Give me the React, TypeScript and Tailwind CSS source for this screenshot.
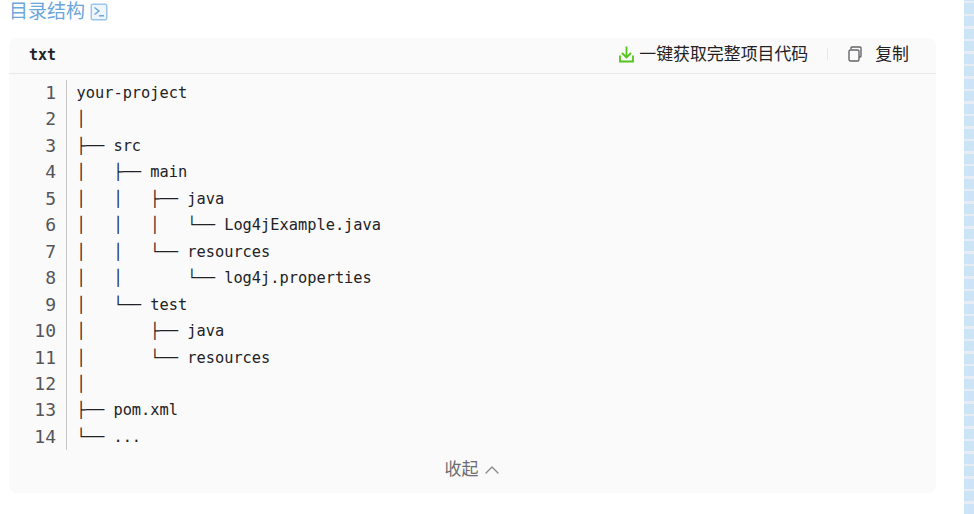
import { ChevronUp } from "lucide-react";

const lines = [
  "your-project",
  "│",
  "├── src",
  "│   ├── main",
  "│   │   ├── java",
  "│   │   │   └── Log4jExample.java",
  "│   │   └── resources",
  "│   │       └── log4j.properties",
  "│   └── test",
  "│       ├── java",
  "│       └── resources",
  "│",
  "├── pom.xml",
  "└── ...",
];

const sans = "font-['Liberation_Sans','Noto_Sans_CJK_SC',sans-serif]";
const mono = "font-['DejaVu_Sans_Mono','Liberation_Mono',monospace]";

function TerminalIcon() {
  return (
    <svg viewBox="0 0 18 18" className="mt-[3px] h-[18px] w-[18px]" fill="none">
      <rect x="1.25" y="1.25" width="15.5" height="15.5" rx="1.5" fill="#eef5fc" stroke="#9cc6ea" strokeWidth="1.5" />
      <path d="M4.5 4.5 9 8 4.5 11.5" stroke="#6ba6dc" strokeWidth="1.4" />
      <path d="M9 12.8h5" stroke="#6ba6dc" strokeWidth="1.5" />
    </svg>
  );
}

function DownloadIcon() {
  return (
    <svg viewBox="0 0 15 17" className="h-[17px] w-[15px]" fill="none" stroke="#52c41a" strokeWidth="1.8">
      <path d="M1 9.5V15.5H14V9.5" />
      <path d="M7.5 0.5V11.5" />
      <path d="M3 7 7.5 11.5 12 7" />
    </svg>
  );
}

function CopyIcon() {
  return (
    <svg viewBox="0 0 14 16" className="h-[16px] w-[14px]" fill="none" stroke="#666669" strokeWidth="1.4">
      <path d="M3 3V2Q3 1 4 1H12Q13 1 13 2V10Q13 11 12 11H11" />
      <rect x="1" y="4" width="10" height="11" rx="1.5" />
    </svg>
  );
}

export default function App() {
  return (
    <div className={`flex h-[514px] w-[974px] overflow-hidden bg-white ${sans}`}>
      <div className="w-[964px] pl-[9px] pr-[28px]">
        <h2 className="flex h-[38px] items-start gap-[5px] text-[19px] leading-[23px] font-normal text-[#6ba6dc]">
          目录结构
          <TerminalIcon />
        </h2>

        <div className="h-[455px] rounded-lg bg-[#fafafa]">
          <div className="flex h-[36px] items-center justify-between border-b border-[#e8e8e8] pr-[27px] pl-[20px]">
            <span className={`text-[15px] font-bold text-[#222226] ${mono}`}>txt</span>
            <div className="flex -translate-y-px items-center text-[16.9px] text-[#222226]">
              <DownloadIcon />
              <span className="ml-[5px]">一键获取完整项目代码</span>
              <span className="mr-[20px] ml-[19px] h-[12px] w-px bg-[#e8e8e8]" />
              <CopyIcon />
              <span className="ml-[13px]">复制</span>
            </div>
          </div>

          <div className={`mt-[6px] flex text-[15.33px] leading-[26.46px] text-[#222226] ${mono}`}>
            <div className="w-[58px] border-r border-[#c8c8c8] pr-[10px] text-right text-[18px] text-[#55555a]">
              {lines.map((_, i) => (
                <div key={i}>{i + 1}</div>
              ))}
            </div>
            <div className="pl-[9.5px]">
              {lines.map((line, i) => (
                <div key={i} className="whitespace-pre">
                  {line}
                </div>
              ))}
            </div>
          </div>

          <div className="mt-[8px] flex items-center justify-center gap-[1.5px] pl-[3.5px] text-[17px] leading-[24px] text-[#6b6b70]">
            收起
            <ChevronUp className="h-[24px] w-[24px] text-[#8a8a8e]" strokeWidth={1.4} />
          </div>
        </div>
      </div>

      <div className="h-full w-[10px] bg-[repeating-linear-gradient(to_bottom,#cbe4f6_0px,#cbe4f6_1px,#e6edf4_1px,#e6edf4_3.5px,#cbe4f6_3.5px,#cbe4f6_12.5px)]" />
    </div>
  );
}
